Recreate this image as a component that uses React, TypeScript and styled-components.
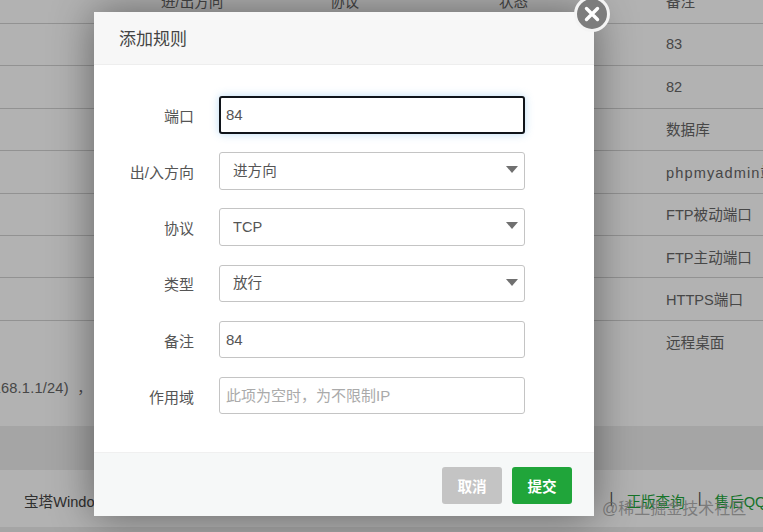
import React from 'react'
import styled, { createGlobalStyle } from 'styled-components'

const cjk = `"Liberation Sans", "Noto Sans CJK SC", sans-serif`

const GlobalStyle = createGlobalStyle`
  html, body {
    margin: 0;
    height: 532px;
    overflow: hidden;
    background: #f0f0f0;
    font-family: ${cjk};
  }
`

const rows = ['83', '82', '数据库', 'phpmyadmin端口', 'FTP被动端口', 'FTP主动端口', 'HTTPS端口', '远程桌面']

const Page = styled.div`
  width: 763px;
  height: 532px;
  overflow: hidden;
  display: flex;
  flex-direction: column;
  color: #666;
  font-size: 14.6px;
  background: #fff;
`

const Row = styled.div<{ $head?: boolean }>`
  flex: none;
  height: ${p => (p.$head ? '24px' : '42.4px')};
  box-sizing: border-box;
  display: grid;
  grid-template-columns: 161px 169px 169px 167px 97px;
  align-content: ${p => (p.$head ? 'end' : 'normal')};
  align-items: ${p => (p.$head ? 'end' : 'center')};
  padding-bottom: ${p => (p.$head ? '12px' : '1px')};
  border-bottom: 1px solid #d2d2d2;
  white-space: nowrap;
  overflow: ${p => (p.$head ? 'visible' : 'hidden')};
`

const LastRow = styled(Row)`
  border-bottom: 0;
  height: 42px;
`

const RowNote = styled.span<{ $wide?: boolean }>`
  letter-spacing: ${p => (p.$wide ? '1.1px' : '0')};
`

const Note = styled.div`
  flex: none;
  width: 92px;
  height: 63px;
  display: flex;
  justify-content: flex-end;
  overflow: hidden;
  white-space: nowrap;
  line-height: 50px;
  letter-spacing: 0.2px;
`

const Band = styled.div`
  flex: none;
  height: 44px;
  background: #ededed;
`

const Footer = styled.div`
  flex: none;
  height: 57px;
  display: flex;
  align-items: center;
  padding: 5px 0 0 24px;
  box-sizing: border-box;
  color: #444;
  white-space: nowrap;
  background: #fff;
`

const FooterLinks = styled.div`
  margin-left: 468px;
  display: flex;
  gap: 13px;
  color: #20a53a;
`

const Sep = styled.span`
  color: #555;
`

const BottomStrip = styled.div`
  flex: 1;
  background: #ededed;
`

const Overlay = styled.div`
  position: absolute;
  inset: 0;
  background: rgba(0, 0, 0, 0.3);
`

const Modal = styled.div`
  position: absolute;
  left: 94px;
  top: 12px;
  width: 500px;
  height: 504px;
  display: flex;
  flex-direction: column;
  background: #fff;
  box-shadow: 0 0 40px rgba(0, 0, 0, 0.45);
`

const Header = styled.div`
  flex: none;
  height: 53px;
  box-sizing: border-box;
  padding: 0 0 1px 25px;
  display: flex;
  align-items: center;
  font-size: 17px;
  color: #444;
  background: #f7f7f7;
  border-bottom: 1px solid #eee;
`

const CloseButton = styled.div`
  position: absolute;
  right: -16px;
  top: -16px;
  width: 36px;
  height: 36px;
  box-sizing: border-box;
  border-radius: 50%;
  border: 3px solid #f4f4f4;
  background: #7d7d7d;
  display: flex;
  align-items: center;
  justify-content: center;
`

const Form = styled.div`
  flex: 1;
  box-sizing: border-box;
  padding-top: 31px;
  display: flex;
  flex-direction: column;
  gap: 18.7px;
`

const Field = styled.div`
  display: flex;
  align-items: center;
  height: 37.5px;
`

const Label = styled.label`
  width: 100px;
  margin-right: 25px;
  padding-top: 1px;
  text-align: right;
  font-size: 15px;
  color: #555;
  white-space: nowrap;
`

const TextInput = styled.input<{ $focus?: boolean }>`
  width: 306px;
  height: 37.5px;
  box-sizing: border-box;
  padding: 0 ${p => (p.$focus ? '5px' : '6px')};
  border: ${p => (p.$focus ? '2px solid #10141a' : '1px solid #c4c4c4')};
  border-radius: 3px;
  outline: 0;
  font: 15px ${cjk};
  color: #555;
  background: #fff;
  box-shadow: ${p => (p.$focus ? '0 0 8px rgba(102, 175, 233, 0.45)' : 'none')};
  &::placeholder {
    color: #aaa;
  }
`

const SelectWrap = styled.div`
  position: relative;
  width: 306px;
  height: 37.5px;
  &::after {
    content: '';
    position: absolute;
    right: 7px;
    top: 14px;
    border-left: 6.5px solid transparent;
    border-right: 6.5px solid transparent;
    border-top: 7px solid #707070;
  }
`

const Select = styled.select`
  appearance: none;
  width: 100%;
  height: 100%;
  box-sizing: border-box;
  padding: 0 13px;
  border: 1px solid #c4c4c4;
  border-radius: 3px;
  outline: 0;
  font: 14.6px ${cjk};
  color: #555;
  background: #fff;
`

const ModalFooter = styled.div`
  flex: none;
  height: 64px;
  box-sizing: border-box;
  padding: 14px 22px 0 0;
  display: flex;
  justify-content: flex-end;
  gap: 10px;
  background: #f6f8f8;
  border-top: 1px solid #f0f0f0;
`

const Button = styled.button<{ $primary?: boolean }>`
  width: 60px;
  height: 37px;
  border: 0;
  border-radius: 3px;
  padding: 0;
  font: bold 14.6px ${cjk};
  color: #fff;
  background: ${p => (p.$primary ? '#20a53a' : '#c4c4c4')};
`

const Watermark = styled.div`
  position: absolute;
  left: 602px;
  top: 495px;
  font-size: 16px;
  color: rgba(110, 110, 110, 0.8);
  white-space: nowrap;
`

const fieldOptions = [
  { label: '出/入方向', value: '进方向' },
  { label: '协议', value: 'TCP' },
  { label: '类型', value: '放行' },
]

export default function App() {
  return (
    <>
      <GlobalStyle />
      <Page>
        <Row $head>
          <span />
          <span>进/出方向</span>
          <span>协议</span>
          <span>状态</span>
          <span>备注</span>
        </Row>
        {rows.slice(0, 7).map(note => (
          <Row key={note}>
            <span />
            <span />
            <span />
            <span />
            <RowNote $wide={note.startsWith('php')}>{note}</RowNote>
          </Row>
        ))}
        <LastRow>
          <span />
          <span />
          <span />
          <span />
          <RowNote>{rows[7]}</RowNote>
        </LastRow>
        <Note>192.168.1.1/24)&nbsp;&nbsp;，</Note>
        <Band />
        <Footer>
          宝塔Windows面板
          <FooterLinks>
            <Sep>|</Sep>
            <span>正版查询</span>
            <Sep>|</Sep>
            <span>售后QQ</span>
          </FooterLinks>
        </Footer>
        <BottomStrip />
      </Page>
      <Overlay />
      <Watermark>@稀土掘金技术社区</Watermark>
      <Modal>
        <Header>添加规则</Header>
        <CloseButton>
          <svg width="20" height="20" viewBox="0 0 20 20">
            <path d="M4.5 4.5 L15.5 15.5 M15.5 4.5 L4.5 15.5" stroke="#fff" strokeWidth="3.4" strokeLinecap="round" />
          </svg>
        </CloseButton>
        <Form>
          <Field>
            <Label>端口</Label>
            <TextInput $focus defaultValue="84" />
          </Field>
          {fieldOptions.map(f => (
            <Field key={f.label}>
              <Label>{f.label}</Label>
              <SelectWrap>
                <Select defaultValue={f.value}>
                  <option>{f.value}</option>
                </Select>
              </SelectWrap>
            </Field>
          ))}
          <Field>
            <Label>备注</Label>
            <TextInput defaultValue="84" />
          </Field>
          <Field>
            <Label>作用域</Label>
            <TextInput placeholder="此项为空时，为不限制IP" />
          </Field>
        </Form>
        <ModalFooter>
          <Button>取消</Button>
          <Button $primary>提交</Button>
        </ModalFooter>
      </Modal>
    </>
  )
}
